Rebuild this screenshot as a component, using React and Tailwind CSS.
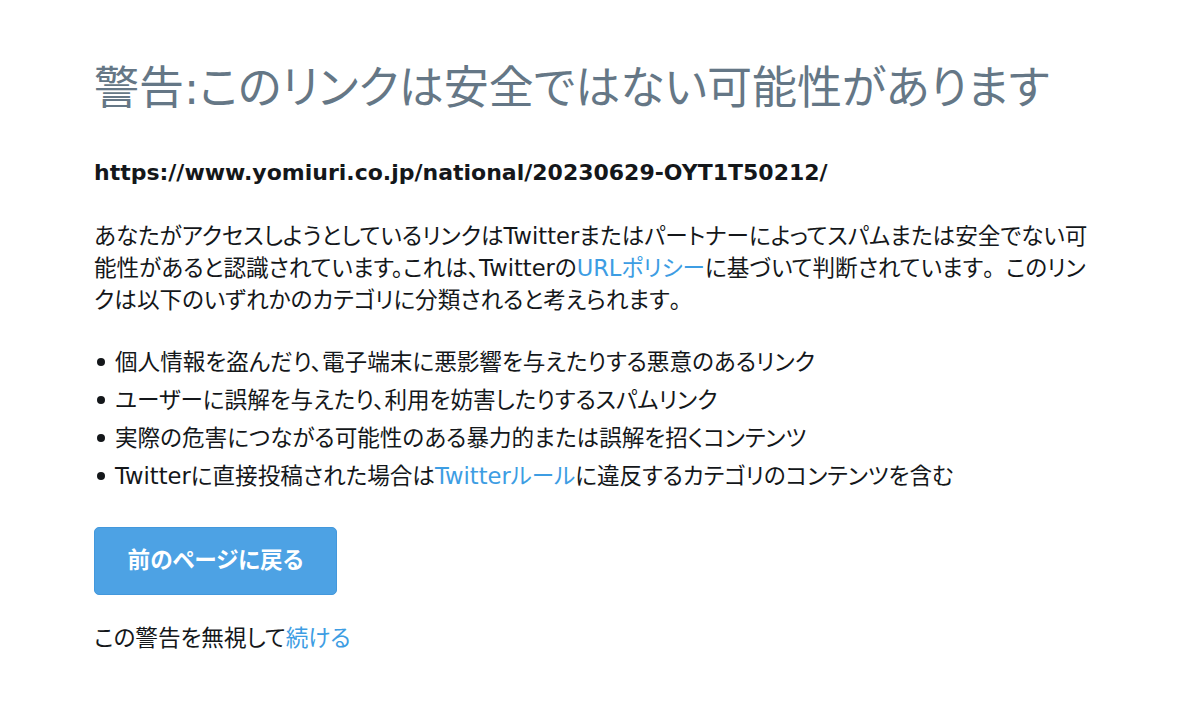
import React from 'react';

const font = { fontFamily: '"DejaVu Sans", "Noto Sans CJK JP", sans-serif' };

// full-width period, as the reference sets it
const Maru = () => <span className="[font-feature-settings:normal]">。</span>;

const items = [
    <>個人情報を盗んだり、電子端末に悪影響を与えたりする悪意のあるリンク</>,
    <>ユーザーに誤解を与えたり、利用を妨害したりするスパムリンク</>,
    <>実際の危害につながる可能性のある暴力的または誤解を招くコンテンツ</>,
    <>
        Twitterに直接投稿された場合は<a href="#" className="text-[#3d9de3]">Twitterルール</a>に違反するカテゴリのコンテンツを含む
    </>,
];

export default function App() {
    return (
        <div className="min-h-[721px] w-full bg-white text-[#14171a] [font-feature-settings:'palt']" style={font}>
            <div className="pl-[94px] pt-[62px] w-[1099px]">
                {/* Title */}
                <h1 className="text-[45px] leading-[53px] text-[#657786] font-normal">
                    警告:このリンクは安全ではない可能性があります
                </h1>

                {/* Target URL */}
                <p className="mt-[44px] text-[22px] leading-[28px] font-bold">
                    https://www.yomiuri.co.jp/national/20230629-OYT1T50212/
                </p>

                {/* Explanation */}
                <p className="mt-[33px] text-[22.6px] leading-[32px]">
                    あなたがアクセスしようとしているリンクはTwitterまたはパートナーによってスパムまたは安全でない可能性があると認識されています。これは、Twitterの
                    <a href="#" className="text-[#3d9de3]">URLポリシー</a>
                    に基づいて判断されています<Maru />このリンクは以下のいずれかのカテゴリに分類されると考えられます<Maru />
                </p>

                {/* Categories */}
                <ul className="mt-[27px] text-[22.6px] leading-[38px]">
                    {items.map((item, i) => (
                        <li key={i} className="flex items-center">
                            <span className="w-[21px] flex-none flex justify-start pl-[3px]">
                                <span className="block w-[8px] h-[8px] rounded-full bg-[#14171a]" />
                            </span>
                            <span>{item}</span>
                        </li>
                    ))}
                </ul>

                {/* Back button */}
                <button className="mt-[32px] flex items-center justify-center w-[243px] h-[68px] rounded-[5px] bg-[#4da2e4] border border-[#4398dc] text-white text-[22.6px] font-bold">
                    前のページに戻る
                </button>

                <p className="mt-[27px] text-[22.6px] leading-[32px]">
                    この警告を無視して<a href="#" className="text-[#3d9de3]">続ける</a>
                </p>
            </div>
        </div>
    );
}
